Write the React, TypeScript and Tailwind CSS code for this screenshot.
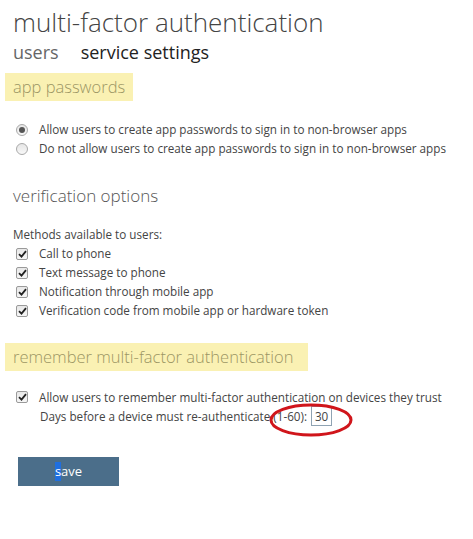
import React from 'react';

function Radio({ checked }: { checked?: boolean }) {
  return (
    <span className="flex h-[12px] w-[12px] shrink-0 items-center justify-center rounded-full border border-[#a9a9a9] bg-gradient-to-b from-[#e6e6e6] to-[#f8f8f8]">
      {checked && <span className="h-[6px] w-[6px] rounded-full bg-[#555]" />}
    </span>
  );
}

function Check() {
  return (
    <span className="flex h-[12px] w-[12px] shrink-0 items-center justify-center rounded-[2px] border border-[#9a9a9a] bg-gradient-to-b from-[#e8e8e8] to-[#f6f6f6]">
      <svg width="9" height="8" viewBox="0 0 9 8">
        <path d="M1 4.2 L3.5 6.6 L8 1.2" fill="none" stroke="#222" strokeWidth="1.8" />
      </svg>
    </span>
  );
}

function Highlight({ children, w }: { children: React.ReactNode; w: string }) {
  return (
    <div className={`ml-[5px] flex h-[28px] items-center whitespace-nowrap bg-[#faf1b3] pl-[8px] text-[16.5px] font-light text-[#9c9664] ${w}`}>
      {children}
    </div>
  );
}

export default function App() {
  const methods = [
    'Call to phone',
    'Text message to phone',
    'Notification through mobile app',
    'Verification code from mobile app or hardware token',
  ];

  return (
    <div className="h-[539px] w-[473px] bg-white pt-[5px] text-[#444] [font-family:'Open_Sans',sans-serif]">
      <h1 className="whitespace-nowrap pl-[13px] text-[26px] font-light leading-[34px] text-[#444]">
        multi-factor authentication
      </h1>
      <div className="flex gap-[22px] pl-[13px] text-[18px] leading-[26px]">
        <span className="text-[#666]">users</span>
        <span className="text-[#222]">service settings</span>
      </div>

      <div className="mt-[8px]">
        <Highlight w="w-[128px]">app passwords</Highlight>
      </div>

      <div className="mt-[19px] flex flex-col pl-[16px] text-[11.7px] leading-[19px]">
        <label className="flex items-center gap-[11px]">
          <Radio checked />
          Allow users to create app passwords to sign in to non-browser apps
        </label>
        <label className="flex items-center gap-[11px]">
          <Radio />
          Do not allow users to create app passwords to sign in to non-browser apps
        </label>
      </div>

      <h2 className="mt-[24px] pl-[13px] text-[17px] font-light leading-[28px] text-[#555]">
        verification options
      </h2>

      <div className="mt-[15px] pl-[13px] text-[11.7px] leading-[19px]">Methods available to users:</div>
      <div className="flex flex-col pl-[16px] text-[11.7px] leading-[19px]">
        {methods.map((m) => (
          <label key={m} className="flex items-center gap-[11px]">
            <Check />
            {m}
          </label>
        ))}
      </div>

      <div className="mt-[23px]">
        <Highlight w="w-[303px]">remember multi-factor authentication</Highlight>
      </div>

      <div className="mt-[17px] flex flex-col pl-[16px] text-[11.7px] leading-[18px]">
        <label className="flex items-center gap-[11px]">
          <Check />
          Allow users to remember multi-factor authentication on devices they trust
        </label>
        <div className="flex items-center pl-[24px]">
          <span>Days before a device must re-authenticate (1-60):</span>
          <span className="relative ml-[4px]">
            <span className="flex h-[20px] w-[21px] items-center justify-center border border-[#8fa3b3] bg-white">30</span>
            <svg className="pointer-events-none absolute left-[-42px] top-[-4px]" width="86" height="36" viewBox="0 0 86 36">
              <ellipse cx="42" cy="18" rx="40" ry="15" fill="none" stroke="#d0151b" strokeWidth="3" />
            </svg>
          </span>
        </div>
      </div>

      <button className="ml-[18px] mt-[31px] flex h-[29px] w-[101px] items-center justify-center bg-[#4b6e8a] text-[13px] text-white">
        <span className="bg-[#1f6fe0]">s</span>ave
      </button>
    </div>
  );
}
